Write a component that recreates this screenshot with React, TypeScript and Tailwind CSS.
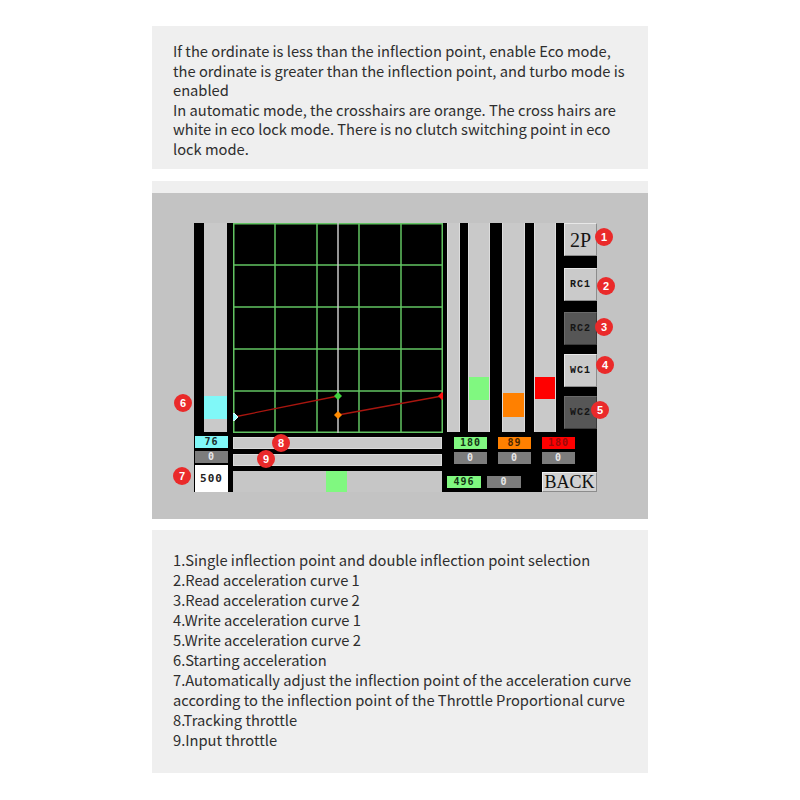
import React from "react";

function Num({ n, pos }: { n: number; pos: string }) {
  return (
    <div
      className={`absolute ${pos} w-[18px] h-[18px] rounded-full bg-[#ea2a2a] text-white text-[11px] font-bold font-['Liberation_Sans',sans-serif] flex items-center justify-center leading-none`}
    >
      {n}
    </div>
  );
}

function Cell({ cls, children }: { cls: string; children: React.ReactNode }) {
  return (
    <div
      className={`flex items-center justify-center font-['DejaVu_Sans_Mono',monospace] font-bold text-[10px] tracking-[1px] leading-none ${cls}`}
    >
      {children}
    </div>
  );
}

function Chart() {
  const lines = [0.75, 42, 84, 126, 168, 209.25];
  return (
    <svg width="210" height="210" className="block bg-black">
      {lines.map((v) => (
        <line key={"v" + v} x1={v} y1="0" x2={v} y2="210" stroke="#62c462" strokeWidth="1.5" />
      ))}
      {lines.map((v) => (
        <line key={"h" + v} x1="0" y1={v} x2="210" y2={v} stroke="#62c462" strokeWidth="1.5" />
      ))}
      <line x1="105" y1="0" x2="105" y2="210" stroke="#c8c8c8" strokeWidth="1.5" />
      <line x1="1" y1="194" x2="105" y2="173" stroke="#a8160f" strokeWidth="1.3" />
      <line x1="105" y1="192" x2="209" y2="173" stroke="#a8160f" strokeWidth="1.3" />
      <polygon points="1,190 5,194 1,198 -3,194" fill="#9ff" stroke="#dff" strokeWidth="1" />
      <polygon points="105,169 109,173 105,177 101,173" fill="#3fd23f" />
      <polygon points="105,188 109,192 105,196 101,192" fill="#ff8a00" />
      <polygon points="209,169 213,173 209,177 205,173" fill="#ff1010" />
    </svg>
  );
}

function Track({ pad, block }: { pad: string; block: string }) {
  return (
    <div className={`flex flex-col bg-[#c9c9c9] border-x border-[#dcdcdc] ${pad}`}>
      <div className={block} />
    </div>
  );
}

function Btn({ dark, serif, children, cls }: { dark?: boolean; serif?: boolean; children: React.ReactNode; cls?: string }) {
  return (
    <div
      className={`h-[33px] w-[33px] flex items-center justify-center border ${
        dark
          ? "bg-[#565656] border-t-[#6a6a6a] border-l-[#6a6a6a] border-r-[#3a3a3a] border-b-[#3a3a3a] text-[#151515]"
          : "bg-[#cacaca] border-t-[#e8e8e8] border-l-[#e8e8e8] border-r-[#8c8c8c] border-b-[#8c8c8c] text-[#151515]"
      } ${
        serif
          ? "font-['Liberation_Serif',serif] text-[20px]"
          : "font-['Liberation_Mono',monospace] font-bold text-[10px] tracking-[1px]"
      } ${cls ?? ""}`}
    >
      {children}
    </div>
  );
}

function Screen() {
  return (
    <div className="relative h-[326px] bg-[#c3c3c3] pl-[42px] pt-[30px]">
      <div className="flex">
        {/* left column */}
        <div className="w-[39px] flex flex-col">
          <div className="h-[209px] flex">
            <div className="w-[10px] bg-black" />
            <div className="w-[23px] flex flex-col pt-[173px] bg-[#c9c9c9]">
              <div className="h-[23px] bg-[#80f8f8]" />
            </div>
            <div className="w-[6px] bg-black" />
          </div>
          <div className="h-[60px] bg-black pl-px pr-[5px] pt-[4px] flex flex-col">
            <Cell cls="h-[12px] bg-[#80f8f8] text-[#1a2a2a]">76</Cell>
            <Cell cls="h-[12px] mt-[3px] bg-[#7c7c7c] text-[#e8e8e8]">0</Cell>
            <Cell cls="h-[27px] mt-[2px] bg-white text-[#222] text-[11px]">500</Cell>
          </div>
        </div>

        {/* chart column */}
        <div className="w-[210px] flex flex-col">
          <Chart />
          <div className="bg-black pt-[4px] flex flex-col">
            <div className="w-[209px] h-[12px] bg-[#c9c9c9] border border-[#dadada]" />
            <div className="w-[209px] h-[12px] mt-[5px] bg-[#c9c9c9] border border-[#dadada]" />
            <div className="w-[209px] h-[21px] mt-[5px] bg-[#c6c6c6] pl-[93px]">
              <div className="w-[21px] h-[21px] bg-[#80f880]" />
            </div>
          </div>
        </div>

        {/* right column */}
        <div className="w-[154px] flex flex-col">
          <div className="h-[209px] flex">
            <div className="w-[4px] bg-black" />
            <div className="w-[13px] bg-[#c9c9c9] border-x border-[#dcdcdc]" />
            <div className="w-[8px] bg-black" />
            <div className="w-[22px]">
              <Track pad="h-full pt-[154px]" block="h-[23px] bg-[#80f880]" />
            </div>
            <div className="w-[12px] bg-black" />
            <div className="w-[23px]">
              <Track pad="h-full pt-[170px]" block="h-[24px] bg-[#ff8000]" />
            </div>
            <div className="w-[9px] bg-black" />
            <div className="w-[22px]">
              <Track pad="h-full pt-[154px]" block="h-[22px] bg-[#ff0000]" />
            </div>
            <div className="w-[8px] bg-black" />
            <div className="w-[33px] bg-black flex flex-col">
              <Btn serif>2P</Btn>
              <Btn cls="mt-[12px]">RC1</Btn>
              <Btn dark cls="mt-[11px]">RC2</Btn>
              <Btn cls="mt-[9px]">WC1</Btn>
              <Btn dark cls="mt-[9px]">WC2</Btn>
            </div>
          </div>
          <div className="h-[60px] bg-black pt-[5px] flex flex-col">
            <div className="flex pl-[11px] gap-[11px]">
              <Cell cls="w-[33px] h-[12px] bg-[#80f880] text-[#143314]">180</Cell>
              <Cell cls="w-[33px] h-[12px] bg-[#ff8000] text-[#4a2600]">89</Cell>
              <Cell cls="w-[33px] h-[12px] bg-[#ff0000] text-[#9a0a0a]">180</Cell>
            </div>
            <div className="flex pl-[11px] gap-[11px] mt-[3px]">
              <Cell cls="w-[33px] h-[12px] bg-[#7c7c7c] text-[#e8e8e8]">0</Cell>
              <Cell cls="w-[33px] h-[12px] bg-[#7c7c7c] text-[#e8e8e8]">0</Cell>
              <Cell cls="w-[33px] h-[12px] bg-[#7c7c7c] text-[#e8e8e8]">0</Cell>
            </div>
            <div className="flex items-center h-[20px] mt-[8px] pl-[4px]">
              <Cell cls="w-[34px] h-[12px] bg-[#80f880] text-[#143314]">496</Cell>
              <Cell cls="w-[34px] h-[12px] ml-[6px] bg-[#7c7c7c] text-[#e8e8e8]">0</Cell>
              <div className="w-[55px] h-[20px] ml-[21px] bg-[#d2d2d2] border border-t-[#f0f0f0] border-l-[#f0f0f0] border-r-[#8c8c8c] border-b-[#8c8c8c] flex items-center justify-center font-['Liberation_Serif',serif] text-[18px] leading-none text-[#111]">
                BACK
              </div>
            </div>
          </div>
        </div>
      </div>

      <Num n={1} pos="left-[443px] top-[35px]" />
      <Num n={2} pos="left-[445px] top-[84px]" />
      <Num n={3} pos="left-[443px] top-[125px]" />
      <Num n={4} pos="left-[444px] top-[163px]" />
      <Num n={5} pos="left-[439px] top-[208px]" />
      <Num n={6} pos="left-[22px] top-[201px]" />
      <Num n={7} pos="left-[21px] top-[274px]" />
      <Num n={8} pos="left-[120px] top-[241px]" />
      <Num n={9} pos="left-[105px] top-[257px]" />
    </div>
  );
}

const intro = [
  "If the ordinate is less than the inflection point, enable Eco mode,",
  "the ordinate is greater than the inflection point, and turbo mode is",
  "enabled",
  "In automatic mode, the crosshairs are orange. The cross hairs are",
  "white in eco lock mode. There is no clutch switching point in eco",
  "lock mode.",
];

const legend = [
  "1.Single inflection point and double inflection point selection",
  "2.Read acceleration curve 1",
  "3.Read acceleration curve 2",
  "4.Write acceleration curve 1",
  "5.Write acceleration curve 2",
  "6.Starting acceleration",
  "7.Automatically adjust the inflection point of the acceleration curve",
  "according to the inflection point of the Throttle Proportional curve",
  "8.Tracking throttle",
  "9.Input throttle",
];

export default function App() {
  return (
    <div className="w-[800px] h-[800px] bg-white pt-[26px] flex flex-col items-center font-['Noto_Sans_CJK_SC','Noto_Sans',sans-serif] text-[#2e2e2e]">
      <div className="w-[496px] h-[143px] bg-[#efefef] pt-[15px] px-[21px] text-[14.7px] leading-[19.5px]">
        {intro.map((l) => (
          <div key={l} className="whitespace-nowrap">{l}</div>
        ))}
      </div>

      <div className="w-[496px] mt-[12px] bg-[#efefef] pt-[12px]">
        <Screen />
      </div>

      <div className="w-[496px] h-[243px] mt-[11px] bg-[#efefef] pt-[20px] px-[21px] text-[14.7px] leading-[20px]">
        {legend.map((l) => (
          <div key={l} className="whitespace-nowrap">{l}</div>
        ))}
      </div>
    </div>
  );
}
